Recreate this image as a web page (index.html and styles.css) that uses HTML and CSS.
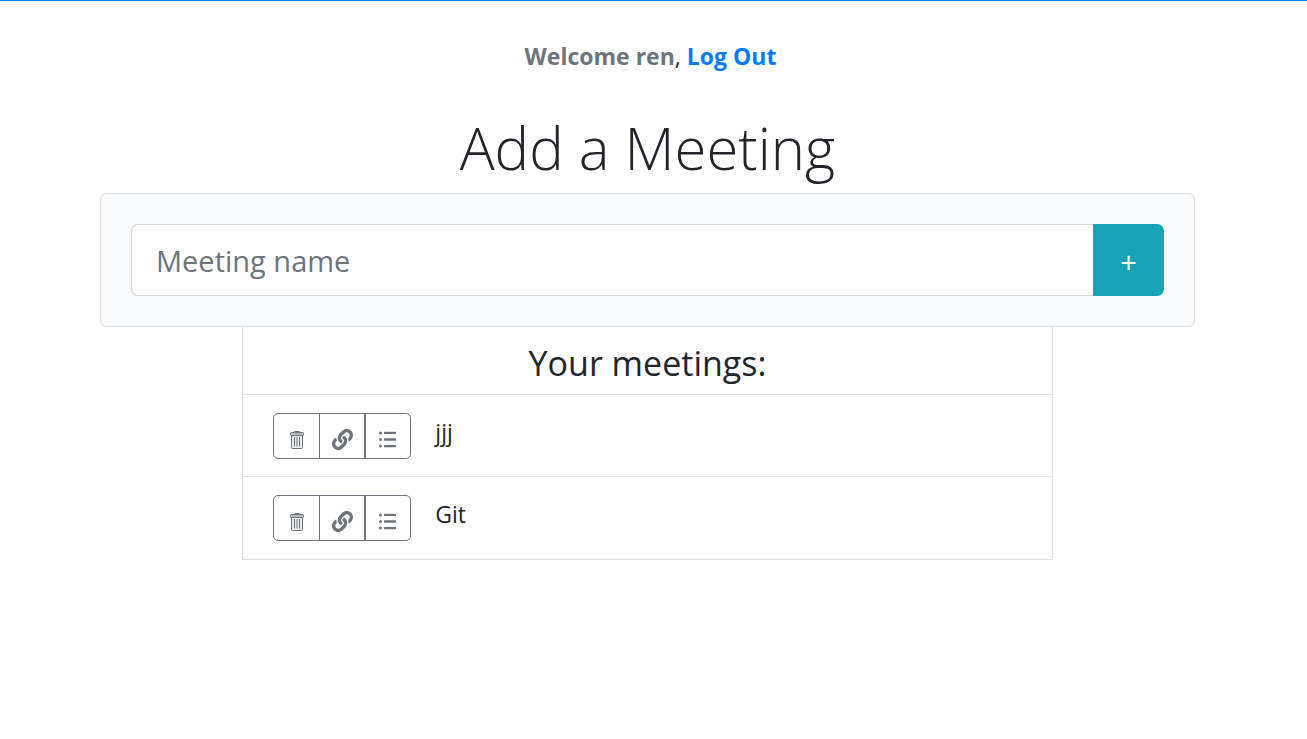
FILE: index.html
```html
<!DOCTYPE html>
<html lang="en">
<head>
<meta charset="utf-8">
<title>Meetings</title>
<link rel="stylesheet" href="styles.css">
</head>
<body>
<svg class="sprite" aria-hidden="true">
  <symbol id="trash" viewBox="0 0 14 18">
    <path d="M4 1.5C5 .2 9 .2 10 1.5" fill="none" stroke="currentColor" stroke-width="1.4"/>
    <rect x=".5" y="1.5" width="13" height="3" rx=".8" fill="currentColor" fill-opacity=".5" stroke="currentColor"/>
    <path d="M1.5 4.5v12.2q0 .8.8.8h9.4q.8 0 .8-.8V4.5" fill="currentColor" fill-opacity=".15" stroke="currentColor"/>
    <path d="M4.5 6v9.5M7 6v9.5M9.5 6v9.5" stroke="currentColor"/>
  </symbol>
  <symbol id="link" viewBox="0 0 512 512">
    <path fill="currentColor" d="M326.612 185.391c59.747 59.809 58.927 155.698.36 214.59-.11.12-.24.25-.36.37l-67.2 67.2c-59.27 59.27-155.699 59.262-214.96 0-59.27-59.26-59.27-155.7 0-214.96l37.106-37.106c9.84-9.84 26.786-3.3 27.294 10.606.648 17.722 3.826 35.527 9.69 52.721 1.986 5.822.567 12.262-3.783 16.612l-13.087 13.087c-28.026 28.026-28.905 73.66-1.155 101.96 28.024 28.579 74.086 28.749 102.325.51l67.2-67.19c28.191-28.191 28.073-73.757 0-101.83-3.701-3.694-7.429-6.564-10.341-8.569a16.037 16.037 0 0 1-6.947-12.606c-.396-10.567 3.348-21.456 11.698-29.806l21.054-21.055c5.521-5.521 14.182-6.199 20.584-1.731a152.482 152.482 0 0 1 20.522 17.197zM467.547 44.449c-59.261-59.262-155.69-59.27-214.96 0l-67.2 67.2c-.12.12-.25.25-.36.37-58.566 58.892-59.387 154.781.36 214.59a152.454 152.454 0 0 0 20.521 17.196c6.402 4.468 15.064 3.789 20.584-1.731l21.054-21.055c8.35-8.35 12.094-19.239 11.698-29.806a16.037 16.037 0 0 0-6.947-12.606c-2.912-2.005-6.64-4.875-10.341-8.569-28.073-28.073-28.191-73.639 0-101.83l67.2-67.19c28.239-28.239 74.3-28.069 102.325.51 27.75 28.3 26.872 73.934-1.155 101.96l-13.087 13.087c-4.35 4.35-5.769 10.79-3.783 16.612 5.864 17.194 9.042 34.999 9.69 52.721.509 13.906 17.454 20.446 27.294 10.606l37.106-37.106c59.271-59.259 59.271-155.699.001-214.959z"/>
  </symbol>
  <symbol id="list" viewBox="0 0 17 17">
    <g fill="currentColor">
      <rect x="5" y=".7" width="12" height="2.4" rx=".6"/><rect x="5" y="7.3" width="12" height="2.4" rx=".6"/><rect x="5" y="13.9" width="12" height="2.4" rx=".6"/>
      <circle cx="1.5" cy="1.9" r="1.5"/><circle cx="1.5" cy="8.5" r="1.5"/><circle cx="1.5" cy="15.1" r="1.5"/>
    </g>
  </symbol>
</svg>
<main class="page">
  <p class="welcome"><strong class="user">Welcome ren</strong>, <a class="logout" href="#">Log Out</a></p>
  <h1 class="title">Add a Meeting</h1>
  <form class="card">
    <input class="name" type="text" placeholder="Meeting name" aria-label="Meeting name">
    <button class="add" type="button" aria-label="Add meeting">+</button>
  </form>
  <section class="meetings">
    <h2 class="heading">Your meetings:</h2>
    <ul class="list">
      <li class="row">
        <div class="group">
          <button class="action" type="button" aria-label="Delete"><svg class="icon-trash"><use href="#trash"/></svg></button>
          <button class="action" type="button" aria-label="Copy link"><svg class="icon-link"><use href="#link"/></svg></button>
          <button class="action" type="button" aria-label="Details"><svg class="icon-list"><use href="#list"/></svg></button>
        </div>
        <span class="label">jjj</span>
      </li>
      <li class="row">
        <div class="group">
          <button class="action" type="button" aria-label="Delete"><svg class="icon-trash"><use href="#trash"/></svg></button>
          <button class="action" type="button" aria-label="Copy link"><svg class="icon-link"><use href="#link"/></svg></button>
          <button class="action" type="button" aria-label="Details"><svg class="icon-list"><use href="#list"/></svg></button>
        </div>
        <span class="label">Git</span>
      </li>
    </ul>
  </section>
</main>
</body>
</html>
```
FILE: styles.css
```css
* { box-sizing: border-box; }
body {
  margin: 0;
  border-top: 1px solid #007bff;
  background: #fff;
  color: #212529;
  font-family: "Segoe UI", "Open Sans", "Noto Sans", sans-serif;
  font-size: 23px;
  line-height: 36px;
}
.sprite { display: none; }
.page { padding: 37px 112px 40px 100px; }
.welcome { margin: 0; padding-left: 6px; text-align: center; }
.user { color: #6c757d; font-weight: 700; }
.logout { color: #007bff; font-weight: 700; text-decoration: none; }
.title {
  margin: 38px 0 9px;
  font-size: 58px;
  font-weight: 300;
  line-height: 72px;
  text-align: center;
}
.card {
  display: flex;
  padding: 30px;
  border: 1px solid #d9dbde;
  border-radius: 6px;
  background: #f8f9fb;
}
.name {
  flex: 1;
  min-width: 0;
  height: 72px;
  padding: 0 24px;
  border: 1px solid #ced4da;
  border-right: 0;
  border-radius: 7px 0 0 7px;
  background: #fff;
  color: #495057;
  font: inherit;
  font-size: 29px;
}
.name::placeholder { color: #6c757d; opacity: 1; }
.add {
  width: 71px;
  padding: 4px 0 0;
  border: 0;
  border-radius: 0 7px 7px 0;
  background: #17a2b8;
  color: #fff;
  font: inherit;
  font-size: 29px;
}
.meetings {
  width: 74%;
  margin: 0 auto;
  border: 1px solid #dfdfdf;
  border-top: 0;
}
.heading {
  margin: 0;
  padding: 14px 0 9px;
  font-size: 34px;
  font-weight: 400;
  line-height: 44px;
  text-align: center;
}
.list { margin: 0; padding: 0; list-style: none; }
.row {
  display: flex;
  align-items: flex-start;
  gap: 24px;
  padding: 18px 30px 17px;
  border-top: 1px solid #dfdfdf;
}
.row:last-child { padding-bottom: 18px; }
.group {
  display: flex;
  border: 1px solid #6c757d;
  border-radius: 5px;
}
.action {
  display: grid;
  place-items: center;
  width: 45px;
  height: 44px;
  padding: 7px 0 0;
  border: 0;
  background: none;
  color: #6c757d;
}
.action + .action { border-left: 1px solid #6c757d; }
.action:last-child { width: 46px; padding-right: 2px; border-left-width: 2px; }
.icon-trash { width: 14px; height: 18px; }
.icon-link { width: 21px; height: 21px; }
.icon-list { width: 17px; height: 17px; }
.label { line-height: 38px; }
```
